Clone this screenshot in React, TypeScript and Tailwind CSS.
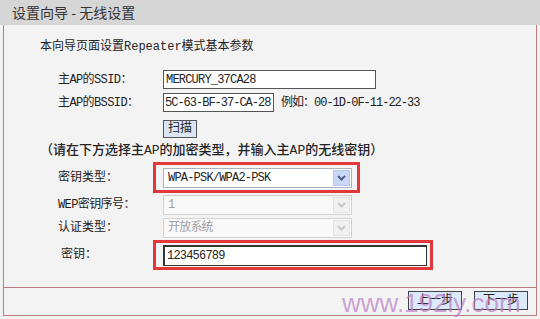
import React from "react";

const mono = "font-['Liberation_Mono','Noto_Sans_CJK_SC',monospace]";

function Chevron({ color }: { color: string }) {
  return (
    <svg width="9" height="6" viewBox="0 0 9 6">
      <path d="M1 1 L4.5 4.5 L8 1" fill="none" stroke={color} strokeWidth="2" />
    </svg>
  );
}

function Select({ value, disabled }: { value: string; disabled?: boolean }) {
  return (
    <div
      className={
        "w-[189px] h-[20px] flex items-center justify-between border " +
        (disabled ? "border-[#d2d2d2] bg-[#f9f9f9] text-[#a0a0a0]" : "border-[#a9b3c2] bg-white text-[#222]")
      }
    >
      <span className="pl-[4px] leading-none whitespace-nowrap tracking-[-0.8px]">{value}</span>
      <div
        className={
          "w-[17px] h-[16px] mr-[1px] flex items-center justify-center border " +
          (disabled ? "border-[#e2e2e2] bg-[#f1f1f1]" : "border-[#b6c7ea] bg-[#c9d8f6]")
        }
      >
        <Chevron color={disabled ? "#c8c8c8" : "#4a5f8c"} />
      </div>
    </div>
  );
}

function Label({ children, className = "" }: { children: React.ReactNode; className?: string }) {
  return <div className={"w-[105px] shrink-0 whitespace-nowrap " + className}>{children}</div>;
}

export default function App() {
  return (
    <div className={"w-[540px] h-[319px] bg-[#f4f3f3] relative overflow-hidden text-[12px] text-[#222] " + mono}>
      <div className="h-[25px] bg-[#d6d6d6] pl-[12px] flex items-center text-[14px] text-[#333] font-['Noto_Sans_CJK_SC',sans-serif] whitespace-pre">
        设置向导 - 无线设置
      </div>

      <div className="ml-[3px] w-[534px] h-[291px] border-x border-b border-[#b97b7b] flex flex-col">
        <div className="h-[262px] flex flex-col">
          <div className="h-[16px] mt-[14px] pl-[36px] flex items-center whitespace-nowrap">本向导页面设置Repeater模式基本参数</div>

          <div className="h-[19px] mt-[15px] pl-[54px] flex items-center">
            <Label className="tracking-[-0.6px]">主AP的SSID：</Label>
            <div className="w-[213px] h-[19px] bg-white border border-[#555] pl-[2px] flex items-center tracking-[-0.8px]">MERCURY_37CA28</div>
          </div>

          <div className="h-[19px] mt-[4px] pl-[54px] flex items-center">
            <Label className="tracking-[-0.6px]">主AP的BSSID：</Label>
            <div className="w-[111px] h-[19px] bg-white border border-[#555] pl-[1px] flex items-center whitespace-nowrap overflow-hidden tracking-[-1px]">5C-63-BF-37-CA-28</div>
            <span className="ml-[7px] whitespace-nowrap tracking-[-1px]">例如：00-1D-0F-11-22-33</span>
          </div>

          <div className="h-[18px] mt-[8px] pl-[159px] flex items-center">
            <div className="w-[34px] h-[18px] bg-[#dae6f6] border border-[#555] flex items-center justify-center">扫描</div>
          </div>

          <div className="h-[18px] mt-[4px] pl-[36px] flex items-center text-[13px] font-medium whitespace-nowrap">
            （请在下方选择主AP的加密类型，并输入主AP的无线密钥）
          </div>

          <div className="h-[31px] mt-[2px] pl-[54px] flex items-center">
            <Label>密钥类型：</Label>
            <div className="-ml-[10px] w-[207px] h-[31px] border-[3px] border-[#e2383c] pl-[7px] flex items-center">
              <Select value="WPA-PSK/WPA2-PSK" />
            </div>
          </div>

          <div className="h-[19px] mt-[2px] pl-[54px] flex items-center">
            <Label className="tracking-[-0.6px]">WEP密钥序号：</Label>
            <Select value="1" disabled />
          </div>

          <div className="h-[20px] mt-[4px] pl-[54px] flex items-center">
            <Label>认证类型：</Label>
            <Select value="开放系统" disabled />
          </div>

          <div className="h-[30px] mt-[2px] pl-[54px] flex items-center">
            <Label className="pl-[3px]">密钥：</Label>
            <div className="-ml-[10px] w-[280px] h-[30px] border-[3px] border-[#e2383c] pl-[7px] flex items-center">
              <div className="w-[264px] h-[21px] bg-white border border-[#333] border-t-2 border-l-2 pl-[2px] flex items-center tracking-[-0.8px]">
                123456789
              </div>
            </div>
          </div>
        </div>

        <div className="flex-1 border-t border-[#b97b7b] flex justify-end items-start pt-[3px] pr-[8px] gap-[12px]">
          <div className="w-[54px] h-[19px] bg-[#dce9fb] border border-[#444] flex items-center justify-center">上一步</div>
          <div className="w-[54px] h-[19px] bg-[#dce9fb] border border-[#444] flex items-center justify-center">下一步</div>
        </div>
      </div>

      <div className="absolute left-[342px] top-[290px] text-[26px] leading-none font-['Liberation_Sans',sans-serif] text-[#b77cc4]/70 pointer-events-none">
        www.192ly.com
      </div>
    </div>
  );
}
